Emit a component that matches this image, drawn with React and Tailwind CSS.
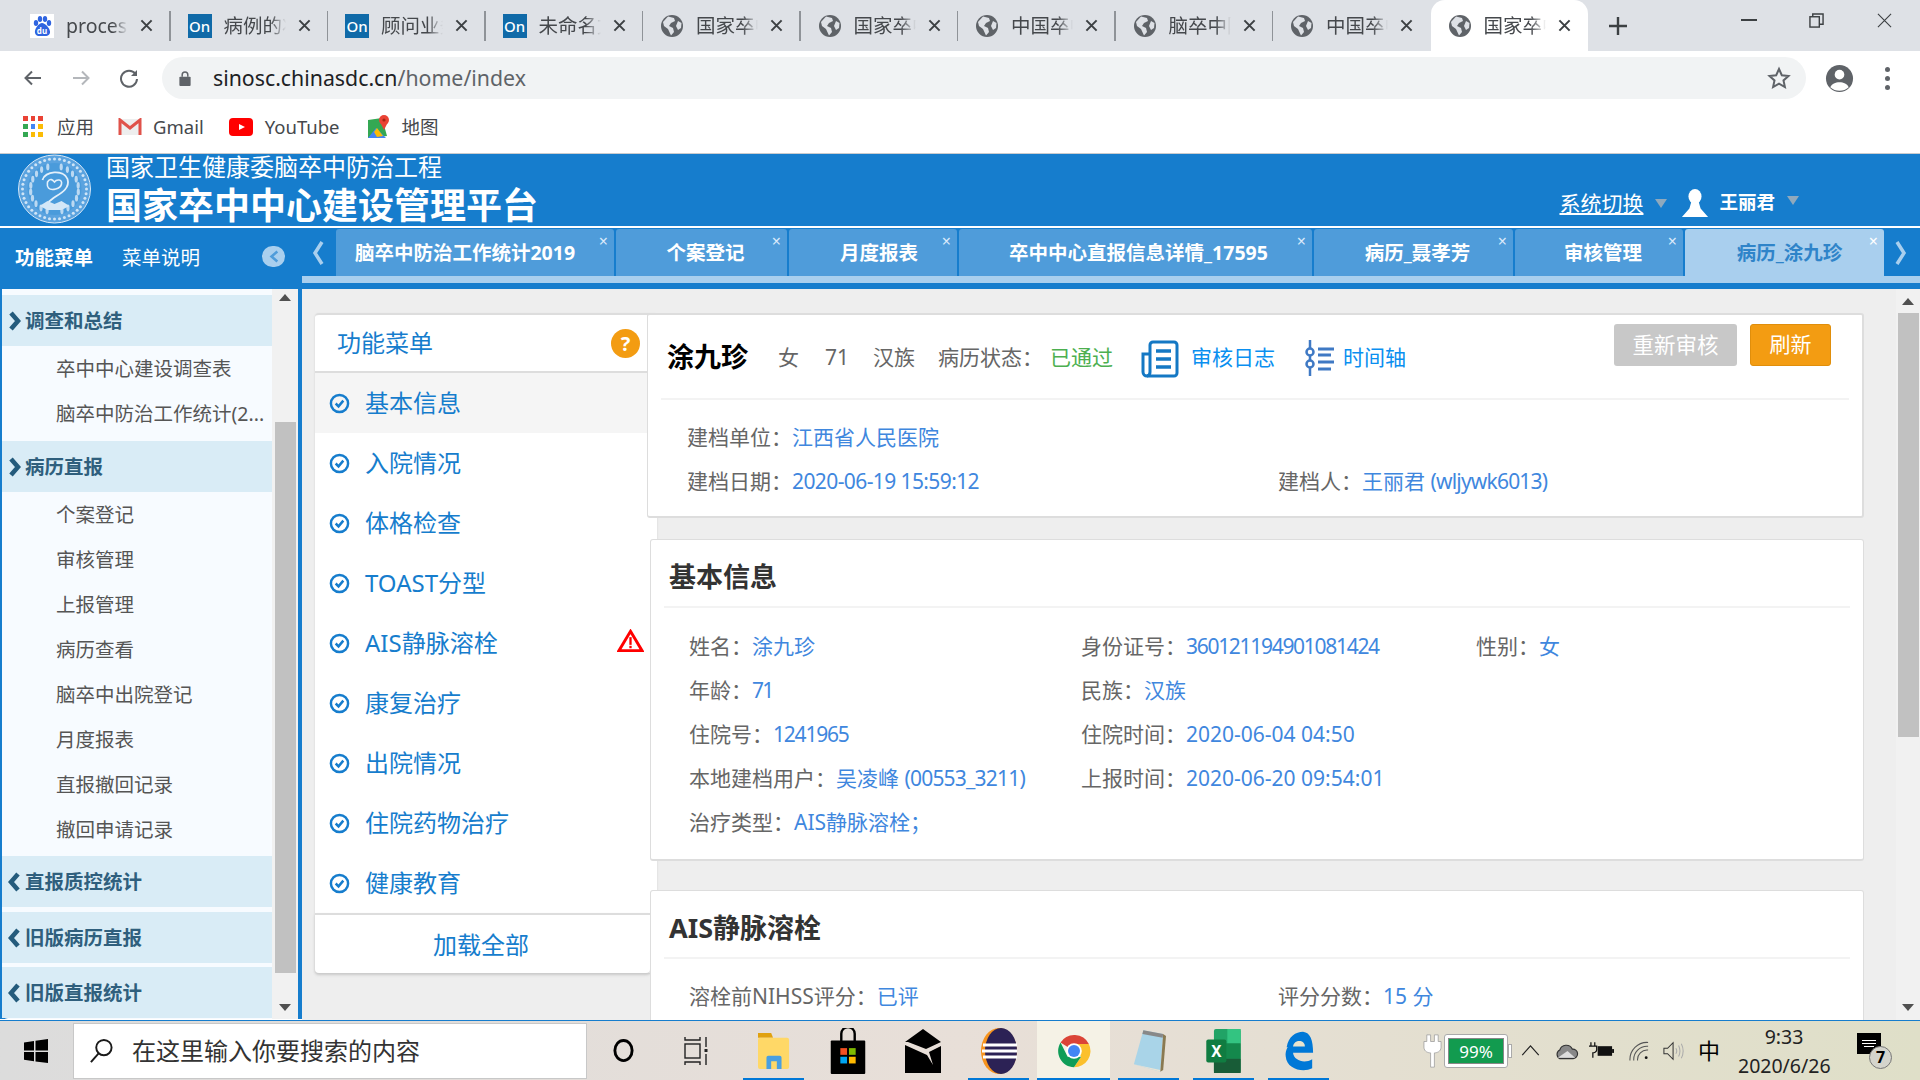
import React from "react";

const FONT = "[font-family:'Noto_Sans','Noto_Sans_CJK_SC',sans-serif]";

function Globe() {
  return (
    <svg viewBox="0 0 24 24" className="w-6 h-6 shrink-0">
      <circle cx="12" cy="12" r="11" fill="#5f6368" />
      <path d="M8 2.5 L14 4 L15 7 L11 9 L9 12 L13 14 L14 18 L11 21.5 L8 15 L4 12 L3 8 Z" fill="#dee1e6" />
      <path d="M18 7 L21.5 9 L21 14 L18 16 L16 12 Z" fill="#dee1e6" />
    </svg>
  );
}
function OnIcon() {
  return (
    <div className="w-6 h-6 shrink-0 bg-[#106aa8] text-white text-[15px] leading-6 text-center font-medium">On</div>
  );
}
function Baidu() {
  return (
    <svg viewBox="0 0 24 24" className="w-6 h-6 shrink-0">
      <rect width="24" height="24" fill="#fff" />
      <ellipse cx="6" cy="9" rx="2.2" ry="3" fill="#2f64e0" />
      <ellipse cx="10" cy="5" rx="2.2" ry="3" fill="#2f64e0" />
      <ellipse cx="15" cy="5" rx="2.2" ry="3" fill="#2f64e0" />
      <ellipse cx="19" cy="9" rx="2.2" ry="3" fill="#2f64e0" />
      <path d="M12 9 C9 9 4 15 5 19 C6 23 10 22 12 22 C14 22 19 23 20 19 C21 15 15 9 12 9Z" fill="#2f64e0" />
      <text x="12" y="20" textAnchor="middle" fontSize="8" fill="#fff" fontWeight="700">du</text>
    </svg>
  );
}

function ChromeTab({ icon, text, active, last }) {
  return (
    <div className={`w-[157.5px] h-[51px] shrink-0 flex items-center relative pl-[17px] ${active ? "bg-white rounded-t-[14px] h-[51px]" : ""}`}>
      {icon}
      <span className="ml-3 w-[62px] overflow-hidden whitespace-nowrap text-[19.5px] text-[#45484c] [mask-image:linear-gradient(to_right,black_75%,transparent)]">
        {text}
      </span>
      <svg viewBox="0 0 14 14" className="w-[13px] h-[15px] ml-[12px] shrink-0" stroke="#3c4043" strokeWidth="2.2" fill="none">
        <path d="M1.5 1.5 L12.5 12.5 M12.5 1.5 L1.5 12.5" />
      </svg>
      {!active && !last && <div className="absolute right-0 top-[11px] h-[30px] w-[1.5px] bg-[#8f9398]" />}
    </div>
  );
}

function TabBar() {
  const tabs = [
    [<Baidu />, "process"],
    [<OnIcon />, "病例的状态"],
    [<OnIcon />, "顾问业务"],
    [<OnIcon />, "未命名文件"],
    [<Globe />, "国家卒中心"],
    [<Globe />, "国家卒中心"],
    [<Globe />, "中国卒中"],
    [<Globe />, "脑卒中防治"],
    [<Globe />, "中国卒中"],
  ];
  return (
    <div className="h-[51px] bg-[#dee1e6] flex items-stretch relative shrink-0 pl-[13px]">
      {tabs.map((t, i) => (
        <ChromeTab key={i} icon={t[0]} text={t[1]} last={i === 8} />
      ))}
      <ChromeTab icon={<Globe />} text="国家卒中心" active />
      <svg viewBox="0 0 20 20" className="w-5 h-5 ml-[20px] self-center" stroke="#3c4043" strokeWidth="2.4">
        <path d="M10 1 V19 M1 10 H19" />
      </svg>
      <div className="flex-1" />
      <div className="flex items-center h-[40px] text-[#3c4043]">
        <div className="w-[16px] h-[1.5px] bg-[#3c4043] mr-[52px]" />
        <svg viewBox="0 0 16 16" className="w-[15px] h-[15px] mr-[53px]" fill="none" stroke="#3c4043" strokeWidth="1.5">
          <rect x="1" y="4" width="10" height="11" />
          <path d="M4 4 V1 H15 V12 H11" />
        </svg>
        <svg viewBox="0 0 16 16" className="w-[15px] h-[15px] mr-[28px]" stroke="#3c4043" strokeWidth="1.2">
          <path d="M1 1 L15 15 M15 1 L1 15" />
        </svg>
      </div>
    </div>
  );
}

function Omnibox() {
  return (
    <div className="h-[51px] bg-white flex items-center shrink-0 pl-[23px] pt-[3px]">
      <svg viewBox="0 0 20 20" className="w-5 h-5" fill="none" stroke="#5f6368" strokeWidth="2">
        <path d="M18 10 H3 M9 3.5 L2.5 10 L9 16.5" />
      </svg>
      <svg viewBox="0 0 20 20" className="w-5 h-5 ml-[28px]" fill="none" stroke="#b4b7bb" strokeWidth="2">
        <path d="M2 10 H17 M11 3.5 L17.5 10 L11 16.5" />
      </svg>
      <svg viewBox="0 0 20 20" className="w-5 h-5 ml-[28px]" fill="none" stroke="#5f6368" strokeWidth="2">
        <path d="M16.5 6 A8 8 0 1 0 18 11" />
        <path d="M18 2 V8 H12" fill="#5f6368" stroke="none" />
      </svg>
      <div className="ml-[23px] w-[1644px] h-[42px] bg-[#f1f3f4] rounded-full flex items-center pl-[17px] relative">
        <svg viewBox="0 0 12 16" className="w-3 h-[15px]" fill="#5f6368">
          <rect x="0" y="6" width="12" height="10" rx="1" />
          <path d="M3 6 V4 A3 3 0 0 1 9 4 V6" fill="none" stroke="#5f6368" strokeWidth="1.6" />
        </svg>
        <span className="ml-[22px] text-[21.3px] text-[#5f6368]">
          <span className="text-[#202124]">sinosc.chinasdc.cn</span>/home/index
        </span>
        <div className="flex-1" />
        <svg viewBox="0 0 24 24" className="w-[24px] h-[24px] mr-[15px]" fill="none" stroke="#5f6368" strokeWidth="2">
          <path d="M12 3 L14.8 9.2 L21.5 9.9 L16.5 14.4 L17.9 21 L12 17.6 L6.1 21 L7.5 14.4 L2.5 9.9 L9.2 9.2 Z" />
        </svg>
      </div>
      <svg viewBox="0 0 30 30" className="w-[29px] h-[29px] ml-[19px]">
        <circle cx="15" cy="15" r="14" fill="#5f6368" />
        <circle cx="15" cy="11" r="5" fill="#fff" />
        <path d="M5.5 24 C8 17 22 17 24.5 24 A14 14 0 0 1 5.5 24Z" fill="#fff" />
      </svg>
      <div className="ml-[31px] flex flex-col gap-[4px]">
        <div className="w-[5px] h-[5px] rounded-full bg-[#5f6368]" />
        <div className="w-[5px] h-[5px] rounded-full bg-[#5f6368]" />
        <div className="w-[5px] h-[5px] rounded-full bg-[#5f6368]" />
      </div>
    </div>
  );
}

function Bookmarks() {
  const cols = ["#ea4335", "#ea4335", "#ea4335", "#34a853", "#4285f4", "#fbbc05", "#34a853", "#fbbc05", "#fbbc05"];
  return (
    <div className="h-[52px] bg-white border-b border-[#c9cbce] flex items-center shrink-0 pl-[23px] pb-[2px] text-[18.5px] text-[#45484c]">
      <div className="grid grid-cols-3 gap-[3px] w-[20px]">
        {cols.map((c, i) => (
          <div key={i} className="h-[5px]" style={{ background: c }} />
        ))}
      </div>
      <span className="ml-[14px]">应用</span>
      <svg viewBox="0 0 24 18" className="w-[24px] h-[18px] ml-[24px]">
        <rect x="1" y="1" width="22" height="16" fill="#eee" />
        <path d="M2 17 V2 L12 10 L22 2 V17" fill="none" stroke="#e0524a" strokeWidth="3" />
      </svg>
      <span className="ml-[11px]">Gmail</span>
      <svg viewBox="0 0 24 18" className="w-[24px] h-[18px] ml-[25px]">
        <rect x="0" y="0" width="24" height="18" rx="4" fill="#f00" />
        <path d="M10 6 L16 9 L10 12Z" fill="#fff" />
      </svg>
      <span className="ml-[12px]">YouTube</span>
      <svg viewBox="0 0 24 24" className="w-[24px] h-[24px] ml-[26px]">
        <path d="M2 5 L16 3 L21 21 L2 23Z" fill="#34a853" />
        <path d="M2 23 L10 13 L20 23Z" fill="#4285f4" />
        <path d="M8 17 L11 13 L17 21 L11 22Z" fill="#fbbc05" />
        <circle cx="18" cy="5" r="5" fill="#ea4335" />
        <path d="M14 7 L18 15 L22 7Z" fill="#ea4335" />
        <circle cx="18" cy="5" r="1.6" fill="#a52714" />
      </svg>
      <span className="ml-[12px]">地图</span>
    </div>
  );
}

function Emblem() {
  const dots = [];
  for (let i = 0; i < 40; i++) {
    const a = (i / 40) * Math.PI * 2;
    dots.push(<circle key={i} cx={37 + Math.cos(a) * 32} cy={35 + Math.sin(a) * 30} r="1.5" fill="#cfe4f6" />);
  }
  const leaves = [];
  for (let i = 0; i < 10; i++) {
    const a = Math.PI * (0.6 + i * 0.09);
    leaves.push(<ellipse key={"l" + i} cx={37 + Math.cos(a) * 24} cy={35 + Math.sin(a) * 23} rx="1.6" ry="3.4" fill="#bcd9f2" />);
    const b = Math.PI * (0.4 - i * 0.09);
    leaves.push(<ellipse key={"r" + i} cx={37 + Math.cos(b) * 24} cy={35 + Math.sin(b) * 23} rx="1.6" ry="3.4" fill="#bcd9f2" />);
  }
  return (
    <svg viewBox="0 0 74 70" className="w-[75px] h-[70px] shrink-0">
      <ellipse cx="37" cy="35" rx="36" ry="34" fill="#5ba3df" />
      <ellipse cx="37" cy="35" rx="36" ry="34" fill="none" stroke="#d5e7f7" strokeWidth="1" />
      {dots}
      <ellipse cx="37" cy="35" rx="27" ry="26" fill="#4a9bdb" />
      {leaves}
      <path d="M25 26 C27 17 46 15 50 25 C53 35 42 40 36 44 L31 48" fill="none" stroke="#e4f0fa" strokeWidth="1.8" />
      <path d="M30 28 C33 23 36 27 37 28 C39 25 45 25 44 30 C43 35 34 37 31 34 C29 32 30 30 30 28Z" fill="none" stroke="#e4f0fa" strokeWidth="1.6" />
      <path d="M22 52 L30 47 L37 50 L44 47 L52 52 L44 56 H30Z" fill="#d4e7f7" />
    </svg>
  );
}

function Header() {
  return (
    <div className="h-[72px] bg-[#167dcd] flex shrink-0 pl-[17px] relative">
      <Emblem />
      <div className="ml-[14px] text-white">
        <div className="text-[24px] leading-[25px] whitespace-nowrap">国家卫生健康委脑卒中防治工程</div>
        <div className="text-[36px] leading-[40px] font-bold mt-[7px] whitespace-nowrap">国家卒中中心建设管理平台</div>
      </div>
      <div className="flex-1" />
      <div className="flex items-center self-end h-[50px] pt-[5px] text-white mr-[121px]">
        <span className="text-[21px] underline">系统切换</span>
        <div className="ml-[12px] w-0 h-0 border-x-[6px] border-x-transparent border-t-[9px] border-t-[#8fa9bd]" />
        <svg viewBox="0 0 28 30" className="w-[28px] h-[28px] ml-[14px] -mt-[2px]" fill="#fff">
          <ellipse cx="14" cy="8" rx="7" ry="8" />
          <path d="M10 14 H18 L20 21 L28 30 H0 L8 21Z" />
        </svg>
        <span className="ml-[10px] text-[18.5px] font-bold -mt-[4px]">王丽君</span>
        <div className="ml-[12px] -mt-[6px] w-0 h-0 border-x-[6px] border-x-transparent border-t-[9px] border-t-[#8fa9bd]" />
      </div>
    </div>
  );
}

function PageTab({ w, off, text, active }) {
  return (
    <div
      style={{ width: w, paddingLeft: off > 0 ? off * 2 : 0, paddingRight: off < 0 ? -off * 2 : 0 }}
      className={`h-[47px] shrink-0 mr-[2px] rounded-t-[3px] relative flex items-center justify-center text-[19.5px] font-bold whitespace-nowrap ${active ? "bg-[#a9cfee] text-[#2f84c9]" : "bg-[#4f9cda] text-white"}`}
    >
      {text}
      <span className={`absolute right-[6px] top-[1px] text-[16px] leading-[22px] font-normal ${active ? "text-white" : "text-[#dbeafa]"}`}>×</span>
    </div>
  );
}

function NavBar() {
  const tabs = [
    [278, "脑卒中防治工作统计2019", -10],
    [171, "个案登记", 4],
    [168, "月度报表", 6],
    [353, "卒中中心直报信息详情_17595", 3],
    [199, "病历_聂孝芳", 4],
    [168, "审核管理", 4],
    [199, "病历_涂九珍", 5, true],
  ];
  return (
    <div className="h-[63px] border-t-2 border-white bg-[#167dcd] flex shrink-0 relative">
      <div className="w-[302px] shrink-0 flex items-start pt-[15px] pl-[15px] text-white text-[19.5px]">
        <span className="font-bold">功能菜单</span>
        <span className="ml-[29px]">菜单说明</span>
        <div className="ml-[62px] mt-[3px] w-[23px] h-[21px] rounded-full bg-[#a9cfee] flex items-center justify-center">
          <svg viewBox="0 0 12 16" className="w-[10px] h-[15px]" fill="none" stroke="#4f9cda" strokeWidth="3">
            <path d="M10 2 L3 8 L10 14" />
          </svg>
        </div>
      </div>
      <div className="flex-1 flex flex-col">
        <div className="flex items-start pt-[1px]">
          <svg viewBox="0 0 14 26" className="w-[14px] h-[26px] ml-[9px] mr-[11px] mt-[11px] shrink-0" fill="none" stroke="#a9cfee" strokeWidth="3.5">
            <path d="M11 2 L4 13 L11 24" />
          </svg>
          {tabs.map((t) => (
            <PageTab key={t[1]} w={t[0]} off={t[2]} text={t[1]} active={t[3]} />
          ))}
          <svg viewBox="0 0 14 26" className="w-[14px] h-[26px] ml-[8px] mt-[11px] shrink-0" fill="none" stroke="#a9cfee" strokeWidth="3.5">
            <path d="M3 2 L10 13 L3 24" />
          </svg>
        </div>
        <div className="h-[7px] bg-[#a9cfee]" />
      </div>
    </div>
  );
}

function Chevron({ dir }) {
  return (
    <svg viewBox="0 0 13 20" className="w-[13px] h-[20px] shrink-0" fill="none" stroke="#245b7c" strokeWidth="4.6">
      <path d={dir === "right" ? "M3 2 L10 10 L3 18" : "M10 2 L3 10 L10 18"} />
    </svg>
  );
}
function SideHead({ text, dir, cls }) {
  return (
    <div className={`h-[51px] bg-[#d9ecf6] flex items-center pl-[6px] gap-[4px] text-[19.5px] font-bold text-[#2f5f7d] ${cls || ""}`}>
      <Chevron dir={dir} />
      {text}
    </div>
  );
}
function SideItem({ text }) {
  return <div className="h-[45px] flex items-center pl-[54px] text-[19.5px] text-[#555] whitespace-nowrap">{text}</div>;
}

function Sidebar() {
  return (
    <div className="w-[302px] shrink-0 bg-[#167dcd] pl-[2px] pr-[4px] flex h-[734px]">
      <div className="w-[270px] bg-[#f7fbff] pt-[10px] rounded-bl-[6px]">
        <SideHead text="调查和总结" dir="right" />
        <SideItem text="卒中中心建设调查表" />
        <SideItem text="脑卒中防治工作统计(2..." />
        <div className="h-[5px]" />
        <SideHead text="病历直报" dir="right" />
        <SideItem text="个案登记" />
        <SideItem text="审核管理" />
        <SideItem text="上报管理" />
        <SideItem text="病历查看" />
        <SideItem text="脑卒中出院登记" />
        <SideItem text="月度报表" />
        <SideItem text="直报撤回记录" />
        <SideItem text="撤回申请记录" />
        <SideHead text="直报质控统计" dir="left" cls="mt-[4px]" />
        <SideHead text="旧版病历直报" dir="left" cls="mt-[5px]" />
        <SideHead text="旧版直报统计" dir="left" cls="mt-[4px]" />
      </div>
      <div className="w-[26px] bg-[#f1f1f1] flex flex-col items-center pt-[9px] pb-[8px]">
        <div className="w-0 h-0 border-x-[6px] border-x-transparent border-b-[7px] border-b-[#505050]" />
        <div className="mt-[121px] w-[21px] h-[551px] bg-[#c1c1c1]" />
        <div className="flex-1" />
        <div className="w-0 h-0 border-x-[6px] border-x-transparent border-t-[7px] border-t-[#505050]" />
      </div>
    </div>
  );
}

function Check() {
  return (
    <svg viewBox="0 0 22 22" className="w-[21px] h-[21px] shrink-0" fill="none" stroke="#167dcd">
      <circle cx="11" cy="11" r="9" strokeWidth="2.6" />
      <path d="M7 11 L10 14 L15 8" strokeWidth="2.6" />
    </svg>
  );
}

function MenuRow({ text, active, warn }) {
  return (
    <div className={`h-[60px] flex items-center pl-[14px] gap-[15px] text-[24px] text-[#167dcd] ${active ? "bg-[#f5f5f5]" : ""}`}>
      <Check />
      <span>{text}</span>
      {warn && (
        <svg viewBox="0 0 28 24" className="w-[27px] h-[24px] ml-[104px] -mt-[4px]">
          <path d="M14 2 L26 22 H2 Z" fill="#fff" stroke="#f00" strokeWidth="3" />
          <rect x="12.8" y="8" width="2.4" height="8" fill="#f00" />
          <rect x="12.8" y="17" width="2.4" height="2.5" fill="#f00" />
        </svg>
      )}
    </div>
  );
}

function LeftMenu() {
  const rows = ["入院情况", "体格检查", "TOAST分型"];
  return (
    <div className="w-[342px] shrink-0 self-start bg-white rounded-[4px] border-t-2 border-[#ddd] shadow-[0_1px_2px_#ccc] relative">
      <div className="h-[58px] border-b-2 border-[#ddd] flex items-center pl-[22px] text-[24px] text-[#167dcd] relative">
        功能菜单
        <div className="absolute left-[296px] top-[14px] w-[29px] h-[29px] rounded-full bg-[#f39c12] text-white font-bold text-[20px] leading-[29px] text-center">?</div>
      </div>
      <MenuRow text="基本信息" active />
      {rows.map((r) => (
        <MenuRow key={r} text={r} />
      ))}
      <MenuRow text="AIS静脉溶栓" warn />
      <MenuRow text="康复治疗" />
      <MenuRow text="出院情况" />
      <MenuRow text="住院药物治疗" />
      <MenuRow text="健康教育" />
      <div className="h-[60px] border-t-2 border-[#ddd] flex items-center pl-[118px] pt-[2px] text-[24px] text-[#167dcd] w-[335px] bg-white rounded-b-[4px] shadow-[0_2px_3px_#ccc]">
        加载全部
      </div>
    </div>
  );
}

const L = ({ children }) => <span className="text-[#666]">{children}</span>;
const V = ({ children }) => <span className="text-[#3f87de]">{children}</span>;

function Field({ label, value }) {
  return (
    <div className="h-[44px] flex items-center whitespace-nowrap">
      <L>{label}：</L>
      <V>{value}</V>
    </div>
  );
}

function PatientCard() {
  return (
    <div className="bg-white border-2 border-[#ddd] border-l-[1px] rounded-[3px] h-[205px] shrink-0 ml-[-10px] relative z-10 px-[13px]">
      <div className="h-[85px] pt-[2px] border-b-2 border-[#f3f3f3] flex items-center text-[21px] text-[#666] relative">
        <span className="ml-[6px] text-[27px] font-bold text-black">涂九珍</span>
        <span className="ml-[30px]">女</span>
        <span className="ml-[26px]">71</span>
        <span className="ml-[24px]">汉族</span>
        <span className="ml-[23px]">病历状态：</span>
        <span className="ml-[7px] text-[#4caf50]">已通过</span>
        <svg viewBox="0 0 38 38" className="w-[38px] h-[38px] ml-[28px] mt-[2px]" fill="none" stroke="#1478c4" strokeWidth="3">
          <path d="M9 25 V5 A3 3 0 0 1 12 2 H33 A3 3 0 0 1 36 5 V33 A3 3 0 0 1 33 36 H6" />
          <path d="M9 14 H2 V32 A4 4 0 0 0 6 36 A4 4 0 0 0 9 32 V25" />
          <path d="M15 11 H30 M15 19 H30 M15 27 H30" strokeWidth="3.5" />
        </svg>
        <span className="ml-[12px] text-[#0a8ff0]">审核日志</span>
        <svg viewBox="0 0 30 38" className="w-[30px] h-[38px] ml-[30px]" fill="none" stroke="#3f79c4" strokeWidth="2.5">
          <path d="M5 1 V37" />
          <circle cx="5" cy="13" r="3.5" fill="#fff" />
          <circle cx="5" cy="25" r="3.5" fill="#fff" />
          <path d="M13 10 H29 M13 16 H26 M13 23 H29 M13 30 H26" strokeWidth="3" />
        </svg>
        <span className="ml-[8px] text-[#0a8ff0]">时间轴</span>
        <div className="absolute left-[953px] top-[9px] w-[123px] h-[42px] rounded-[3px] bg-[#c8c8c8] text-white flex items-center justify-center text-[21.5px]">
          重新审核
        </div>
        <div className="absolute left-[1089px] top-[9px] w-[81px] h-[42px] rounded-[3px] bg-[#f39c12] border border-[#e08e0b] text-white flex items-center justify-center text-[21px]">
          刷新
        </div>
      </div>
      <div className="pl-[26px] pt-[16px] text-[21px]">
        <Field label="建档单位" value="江西省人民医院" />
        <div className="grid grid-cols-[591px_1fr]">
          <Field label="建档日期" value={<span className="tracking-[-0.6px]">2020-06-19 15:59:12</span>} />
          <Field label="建档人" value={<>王丽君 <span className="tracking-[-0.8px]">(wljywk6013)</span></>} />
        </div>
      </div>
    </div>
  );
}

function Section({ title, children, cls }) {
  return (
    <div className={`bg-white border border-[#ddd] border-b-2 rounded-[3px] ml-[-7px] shrink-0 relative z-10 px-[13px] ${cls}`}>
      <div className="h-[68px] border-b-2 border-[#f3f3f3] flex items-center pl-[5px] pt-[8px] text-[27px] font-bold text-[#333] mb-[16px]">{title}</div>
      <div className="pl-[25px] text-[21px]">{children}</div>
    </div>
  );
}

function Main() {
  return (
    <div className="flex-1 bg-[#eeeeee] flex h-[731px] overflow-hidden">
      <div className="w-[1562px] pl-[13px] pt-[24px] flex min-w-0 shrink-0">
        <LeftMenu />
        <div className="flex-1 min-w-0 flex flex-col">
          <PatientCard />
          <Section title="基本信息" cls="mt-[21px] h-[322px]">
            <div className="grid grid-cols-[392px_395px_1fr] pt-[1px]">
              <Field label="姓名" value="涂九珍" />
              <Field label="身份证号" value={<span className="tracking-[-1.3px]">360121194901081424</span>} />
              <Field label="性别" value="女" />
              <Field label="年龄" value={<span className="tracking-[-1.8px]">71</span>} />
              <div className="col-span-2"><Field label="民族" value="汉族" /></div>
              <Field label="住院号" value={<span className="tracking-[-1.2px]">1241965</span>} />
              <div className="col-span-2"><Field label="住院时间" value="2020-06-04 04:50" /></div>
              <Field label="本地建档用户" value={<>吴凌峰 <span className="tracking-[-0.8px]">(00553_3211)</span></>} />
              <div className="col-span-2"><Field label="上报时间" value="2020-06-20 09:54:01" /></div>
              <div className="col-span-3"><Field label="治疗类型" value="AIS静脉溶栓；" /></div>
            </div>
          </Section>
          <Section title="AIS静脉溶栓" cls="mt-[29px] h-[200px]">
            <div className="grid grid-cols-[589px_1fr]">
              <Field label="溶栓前NIHSS评分" value="已评" />
              <Field label="评分分数" value="15 分" />
            </div>
          </Section>
        </div>
      </div>
      <div className="flex-1" />
      <div className="w-[24px] bg-[#f1f1f1] flex flex-col items-center pt-[9px] pb-[9px] self-stretch">
        <div className="w-0 h-0 border-x-[6px] border-x-transparent border-b-[7px] border-b-[#505050]" />
        <div className="mt-[8px] w-[21px] h-[424px] bg-[#c1c1c1]" />
        <div className="flex-1" />
        <div className="w-0 h-0 border-x-[6px] border-x-transparent border-t-[7px] border-t-[#505050]" />
      </div>
    </div>
  );
}

function Slot({ w, ml, active, ind, children }) {
  return (
    <div style={{ width: w, marginLeft: ml }} className={`h-[60px] shrink-0 flex items-center justify-center relative ${active ? "bg-[#f5f2e6]" : ""}`}>
      {children}
      {ind && <div className="absolute left-0 right-0 bottom-0 h-[3px] bg-[#0078d7]" />}
    </div>
  );
}

function Taskbar() {
  return (
    <div className="h-[60px] border-t border-[#167dcd] shrink-0 flex items-center bg-gradient-to-r from-[#dcdcdc] via-[#e8dfd8] to-[#dfdfc8] relative">
      <svg viewBox="0 0 24 24" className="w-[24px] h-[24px] ml-[24px] shrink-0" fill="#000">
        <path d="M0 3.5 L10 2 V11.5 H0Z M11.5 1.8 L24 0 V11.5 H11.5Z M0 13 H10 V22.2 L0 20.8Z M11.5 13 H24 V24 L11.5 22.4Z" />
      </svg>
      <div className="ml-[25px] w-[514px] h-[56px] bg-white flex items-center pl-[15px] border border-[#c8c8c8] shrink-0">
        <svg viewBox="0 0 26 26" className="w-[25px] h-[25px]" fill="none" stroke="#1a1a1a" strokeWidth="2">
          <circle cx="15.5" cy="10" r="8" />
          <path d="M10 16 L2 25" />
        </svg>
        <span className="ml-[18px] text-[24px] text-[#333]">在这里输入你要搜索的内容</span>
      </div>
      <Slot w={72} ml={0}>
        <svg viewBox="0 0 24 26" className="w-[23px] h-[25px]" fill="none" stroke="#000" strokeWidth="3">
          <ellipse cx="12" cy="13" rx="9" ry="10.5" />
        </svg>
      </Slot>
      <Slot w={74} ml={0}>
        <svg viewBox="0 0 24 30" className="w-[24px] h-[30px]" fill="none" stroke="#222" strokeWidth="1.4">
          <path d="M1 1 V4 H16 V1 M1 29 V26 H16 V29" />
          <rect x="1" y="8" width="15" height="14" />
          <path d="M22 1 V11 M22 18 V29" />
          <rect x="20.5" y="13" width="3" height="3" fill="#222" stroke="none" />
        </svg>
      </Slot>
      <Slot w={61} ml={10} ind>
        <svg viewBox="0 0 34 38" className="w-[32px] h-[38px]">
          <path d="M0 0 H14 L16 5 H0Z" fill="#e0a10f" />
          <rect x="0" y="5" width="33" height="33" rx="2" fill="#ffd867" />
          <path d="M9 38 V26 Q9 24 11 24 H23 Q25 24 25 26 V38 H20 V30 H14 V38Z" fill="#4a9fe0" />
        </svg>
      </Slot>
      <Slot w={61} ml={13}>
        <svg viewBox="0 0 36 48" className="w-[36px] h-[46px]">
          <path d="M11 16 V6 A7 7 0 0 1 25 6 V16" fill="none" stroke="#000" strokeWidth="2.5" />
          <rect x="0" y="13" width="36" height="35" rx="1" fill="#000" />
          <rect x="10" y="21" width="7" height="7" fill="#f25022" />
          <rect x="19" y="21" width="7" height="7" fill="#7fba00" />
          <rect x="10" y="30" width="7" height="7" fill="#00a4ef" />
          <rect x="19" y="30" width="7" height="7" fill="#ffb900" />
        </svg>
      </Slot>
      <Slot w={61} ml={14}>
        <svg viewBox="0 0 36 44" className="w-[36px] h-[44px]" fill="#000">
          <path d="M18 0 L36 13 L21 20 L3 13 L0 13Z" />
          <path d="M0 16 L22 26 L28 36 L24 23 L36 17 V44 H0Z" />
        </svg>
      </Slot>
      <Slot w={61} ml={15} ind>
        <svg viewBox="0 0 36 46" className="w-[36px] h-[46px]">
          <ellipse cx="18" cy="23" rx="18" ry="23" fill="#f7941e" />
          <ellipse cx="20" cy="23" rx="16" ry="23" fill="#2c2255" />
          <path d="M2 17 H36 M1 23 H36 M2 29 H36" stroke="#fff" strokeWidth="3" />
        </svg>
      </Slot>
      <Slot w={73} ml={8} active ind>
        <svg viewBox="0 0 48 48" className="w-[34px] h-[46px]">
          <path d="M24 24 L5 12 A23 23 0 0 1 45 14 L24 14Z" fill="#db4437" />
          <path d="M24 47 A23 23 0 0 0 45 14 L24 14 L34 32 Z" fill="#fbc02d" />
          <path d="M24 47 A23 23 0 0 1 5 12 L15 32 L34 32Z" fill="#0f9d58" />
          <circle cx="24" cy="24" r="11" fill="#fff" />
          <circle cx="24" cy="24" r="8.5" fill="#4285f4" />
        </svg>
      </Slot>
      <Slot w={61} ml={8} ind>
        <svg viewBox="0 0 36 48" className="w-[34px] h-[46px]">
          <path d="M12 2 L33 6 L30 46 L2 38Z" fill="#a9d4e8" />
          <path d="M2 38 L30 46 L33 38 L30 44Z" fill="#e8e4d6" />
          <path d="M33 6 L36 8 L33 44 L30 46Z" fill="#8a7a52" />
          <path d="M12 2 L33 6 L32.5 10 L11 6Z" fill="#888" />
        </svg>
      </Slot>
      <Slot w={61} ml={14} ind>
        <svg viewBox="0 0 36 46" className="w-[35px] h-[44px]">
          <rect x="8" y="0" width="28" height="46" rx="2" fill="#21a366" />
          <rect x="22" y="0" width="14" height="15" fill="#33c481" />
          <rect x="8" y="15" width="28" height="16" fill="#107c41" opacity="0.7" />
          <rect x="8" y="31" width="28" height="15" fill="#185c37" />
          <rect x="0" y="11" width="21" height="24" rx="2" fill="#107c41" />
          <text x="10.5" y="29" textAnchor="middle" fontSize="16" fontWeight="700" fill="#fff">X</text>
        </svg>
      </Slot>
      <Slot w={61} ml={14} ind>
        <svg viewBox="0 0 34 44" className="w-[31px] h-[44px]" fill="none">
          <path d="M4 18 C6 6 14 1 22 1 C30 2 33 10 33 24 H11 C12 33 24 36 32 31 V41 C22 46 4 42 3 28 C2 22 6 14 12 10 C9 14 8 16 8 16 C12 13 14 12 16 14Z" fill="#0078d7" />
          <path d="M11 17 C12 9 24 9 24 17Z" fill="#e8e4ce" />
        </svg>
      </Slot>
      <div className="flex-1" />
      <div className="flex items-center h-full pr-[27px] text-[#222]">
        <svg viewBox="0 0 20 34" className="w-[19px] h-[34px] mr-[2px]" fill="#fff" stroke="#9a9a9a" strokeWidth="0.8">
          <path d="M4 0 H8 V7 H12 V0 H16 V7 H19 V13 C19 18 14 19 12 19 V34 H8 V19 C6 19 1 18 1 13 V7 H4Z" />
        </svg>
        <div className="w-[64px] h-[34px] bg-white border border-[#aaa] rounded-[3px] p-[3px] shrink-0">
          <div className="w-full h-full bg-[#129b4f] text-white text-[17px] leading-[26px] text-center border border-[#888]">99%</div>
        </div>
        <div className="w-[4px] h-[14px] bg-white border border-[#aaa] mr-[9px]" />
        <svg viewBox="0 0 20 12" className="w-[19px] h-[11px]" fill="none" stroke="#222" strokeWidth="1.3">
          <path d="M1 11 L10 1 L19 11" />
        </svg>
        <svg viewBox="0 0 26 18" className="w-[25px] h-[18px] ml-[14px]">
          <path d="M6 17 A5 5 0 0 1 6 8 A7 7 0 0 1 19 7 A5 5 0 0 1 20 17Z" fill="#888" stroke="#333" strokeWidth="1.2" />
          <path d="M4 16 L14 9 L22 16Z" fill="#ddd" />
        </svg>
        <svg viewBox="0 0 26 18" className="w-[25px] h-[18px] ml-[10px]">
          <path d="M2 0 V4 M6 0 V4 M0 4 H8 V8 C8 10 5 11 4 11 V16" fill="none" stroke="#111" strokeWidth="1.3" />
          <rect x="9" y="4" width="15" height="10" fill="#111" />
          <rect x="24" y="7" width="2" height="4" fill="#111" />
        </svg>
        <svg viewBox="0 0 22 20" className="w-[21px] h-[20px] ml-[15px]" fill="none" stroke="#555" strokeWidth="1.1">
          <path d="M1 20 A18 18 0 0 1 20 1 M5 20 A14 14 0 0 1 20 5 M9 20 A10 10 0 0 1 20 9" />
          <circle cx="18" cy="17" r="1.5" fill="#111" stroke="none" />
        </svg>
        <svg viewBox="0 0 24 20" className="w-[22px] h-[20px] ml-[13px]" fill="none" stroke="#333" strokeWidth="1.1">
          <path d="M1 7 H5 L11 1 V19 L5 13 H1Z" />
          <path d="M14 7 Q16 10 14 13 M17 4 Q20 10 17 16 M20 2 Q24 10 20 18" stroke="#aaa" />
        </svg>
        <span className="ml-[13px] text-[22px] text-black">中</span>
        <div className="ml-[18px] w-[92px] text-center text-[19.5px] leading-[29px] text-[#222] mr-[27px]">
          <div>9:33</div>
          <div className="whitespace-nowrap">2020/6/26</div>
        </div>
        <div className="relative w-[36px] h-[36px]">
          <div className="absolute left-0 top-0 w-[24px] h-[21px] bg-black flex flex-col items-center justify-center gap-[2px]">
            <div className="w-[14px] h-[1px] bg-white" />
            <div className="w-[14px] h-[1px] bg-white" />
            <div className="w-[10px] h-[1px] bg-white" />
          </div>
          <div className="absolute left-[12px] top-[13px] w-[23px] h-[23px] rounded-full bg-[#d4d4cc] border border-[#777] text-[16px] leading-[21px] text-center font-bold text-black">7</div>
        </div>
      </div>
    </div>
  );
}

export default function App() {
  return (
    <div className={`w-[1920px] h-[1080px] overflow-hidden flex flex-col bg-white ${FONT}`}>
      <TabBar />
      <Omnibox />
      <Bookmarks />
      <Header />
      <NavBar />
      <div className="flex h-[731px] overflow-hidden shrink-0">
        <div className="-mt-[4px]">
          <Sidebar />
        </div>
        <Main />
      </div>
      <Taskbar />
    </div>
  );
}
